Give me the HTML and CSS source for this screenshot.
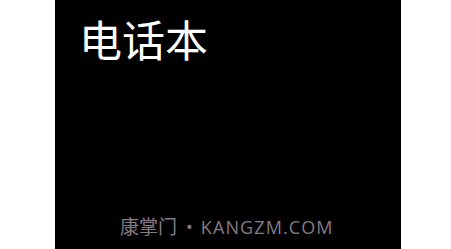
FILE: index.html
```html
<!DOCTYPE html>
<html>
<head>
<meta charset="utf-8">
<link rel="stylesheet" href="styles.css">
</head>
<body>
<div class="screen">
  <h1 class="title">电话本</h1>
  <div class="footer"><span class="cjk">康掌门</span><span class="dot">•</span><span class="latin">KANGZM.COM</span></div>
</div>
</body>
</html>
```
FILE: styles.css
```css
html, body {
  margin: 0;
  padding: 0;
  background: #ffffff;
}
.screen {
  width: 346px;
  height: 249px;
  margin-left: 55px;
  background: #000000;
  display: flex;
  flex-direction: column;
  box-sizing: border-box;
  padding: 12px 0 0 24px;
}
.title {
  margin: 0;
  font-family: "Noto Sans CJK SC", sans-serif;
  font-weight: 400;
  font-size: 43px;
  line-height: 52px;
  color: #ffffff;
}
.footer {
  margin-top: auto;
  margin-bottom: 10px;
  margin-left: 41px;
  display: flex;
  align-items: baseline;
  font-family: "Open Sans", "Noto Sans CJK SC", sans-serif;
  font-size: 18px;
  line-height: 24px;
  color: #857a86;
}
.cjk {
  font-family: "Noto Sans CJK SC", sans-serif;
  font-size: 19px;
}
.dot {
  margin: 0 8px 0 9px;
}
.latin {
  letter-spacing: 1.1px;
}
```
